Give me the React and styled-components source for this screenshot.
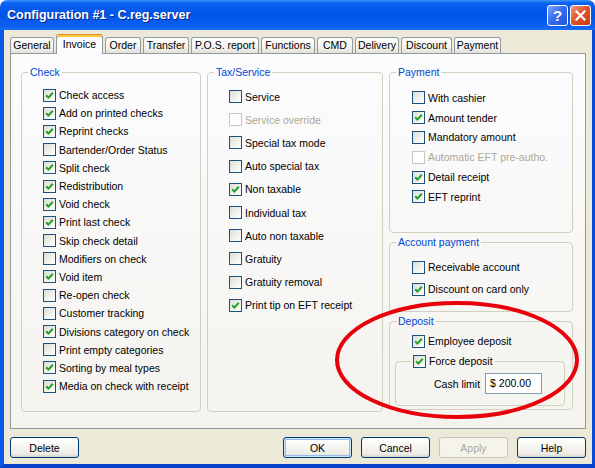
import styled, { createGlobalStyle } from "styled-components";

const GlobalStyle = createGlobalStyle`
  html, body {
    margin: 0;
    padding: 0;
    background: #ffffff;
  }
  body {
    font-family: "Liberation Sans", Arial, sans-serif;
    font-size: 10.5px;
  }
`;

const Window = styled.div`
  position: relative;
  width: 595px;
  height: 468px;
  display: flex;
  flex-direction: column;
  overflow: hidden;
`;

const TitleBar = styled.div`
  height: 30px;
  flex-shrink: 0;
  display: flex;
  align-items: center;
  padding: 0 4px 0 7px;
  border-radius: 7px 7px 0 0;
  background: linear-gradient(
    180deg,
    #3d95ff 0%,
    #0a62f0 10%,
    #0055e8 45%,
    #0a5ff0 85%,
    #1a6cf5 100%
  );
`;

const Title = styled.div`
  flex: 1;
  color: #ffffff;
  font-weight: 700;
  font-size: 12.5px;
  text-shadow: 1px 1px 0 #0a1e8c;
`;

const CaptionButton = styled.div`
  width: 21px;
  height: 21px;
  box-sizing: border-box;
  margin-left: 2px;
  border: 1px solid #ffffff;
  border-radius: 3px;
  display: flex;
  align-items: center;
  justify-content: center;
  color: #ffffff;
  font-weight: 700;
  font-size: 15px;
  background: ${({ $close }) =>
    $close
      ? "linear-gradient(135deg, #f0a080 0%, #e0552d 45%, #c8380f 100%)"
      : "linear-gradient(135deg, #80a8ff 0%, #3a6ef0 45%, #2254e0 100%)"};
`;

const Frame = styled.div`
  flex: 1;
  display: flex;
  flex-direction: column;
  background: #ece9d8;
  border-left: 4px solid #0a58e8;
  border-right: 3px solid #0a4ad8;
  border-bottom: 4px solid #0841c8;
  padding: 4px 6px 6px 6px;
`;

const TabRow = styled.div`
  height: 20px;
  display: flex;
  align-items: flex-end;
  gap: 2px;
`;

const Tab = styled.div`
  box-sizing: border-box;
  width: ${({ $w }) => $w}px;
  height: ${({ $active }) => ($active ? 20 : 16)}px;
  margin-bottom: ${({ $active }) => ($active ? 0 : 1)}px;
  padding-top: ${({ $active }) => ($active ? 2 : 0)}px;
  line-height: 15px;
  text-align: center;
  color: #000000;
  border: 1px solid #919b9c;
  border-bottom: none;
  border-radius: 3px 3px 0 0;
  position: relative;
  z-index: ${({ $active }) => ($active ? 1 : 0)};
  ${({ $active }) =>
    $active
      ? `
    border-top-color: #e68b2c;
    background: #fcfcfe;
    box-shadow: inset 0 2px 0 #ffc83c;
  `
      : `
    background: linear-gradient(180deg, #ffffff 0%, #f3f3ef 60%, #e2e1da 100%);
  `}
`;

const Panel = styled.div`
  box-sizing: border-box;
  height: 376px;
  margin-top: -1px;
  border: 1px solid #919b9c;
  background: linear-gradient(180deg, #fcfcfe 0%, #f4f3ee 100%);
  padding: 12px 12px 0 10px;
  display: grid;
  grid-template-columns: 180px 176px 184px;
  column-gap: 6px;
  align-items: start;
`;

const Column = styled.div`
  display: flex;
  flex-direction: column;
  gap: 3px;
`;

const Group = styled.fieldset`
  margin: 0;
  margin-top: ${({ $mt }) => $mt || 0}px;
  min-width: 0;
  box-sizing: border-box;
  height: ${({ $h }) => $h}px;
  border: 1px solid #d0d0bf;
  border-radius: 4px;
  padding: 0;
`;

const Legend = styled.legend`
  margin-left: ${({ $ml }) => $ml || 6}px;
  padding: 0 2px;
  line-height: ${({ $lh }) => $lh || 13}px;
  color: #0046d5;
`;

const Items = styled.div`
  padding: ${({ $pad }) => $pad};
`;

const Row = styled.div`
  display: flex;
  align-items: center;
  gap: 3px;
  height: ${({ $h }) => $h}px;
  padding-left: ${({ $indent }) => $indent || 0}px;
  color: ${({ $disabled }) => ($disabled ? "#aca899" : "#000000")};
  white-space: nowrap;
`;

const Box = styled.span`
  width: 13px;
  height: 13px;
  box-sizing: border-box;
  flex-shrink: 0;
  display: flex;
  align-items: center;
  justify-content: center;
  border: 1px solid ${({ $disabled }) => ($disabled ? "#cac8bb" : "#1c5180")};
  background: ${({ $disabled }) =>
    $disabled
      ? "#ffffff"
      : "linear-gradient(135deg, #dcdcd7 0%, #f0f0ea 50%, #ffffff 100%)"};
`;

const InnerRow = styled.div`
  display: flex;
  align-items: center;
  gap: 5px;
  color: #000000;
`;

const Input = styled.div`
  box-sizing: border-box;
  width: 57px;
  height: 21px;
  border: 1px solid #7f9db9;
  background: #ffffff;
  padding-left: 4px;
  line-height: 19px;
  color: #000000;
`;

const ButtonRow = styled.div`
  margin-top: 8px;
  display: flex;
  gap: 9px;
`;

const Spacer = styled.div`
  flex: 1;
`;

const Button = styled.div`
  box-sizing: border-box;
  width: 69px;
  height: 21px;
  border-radius: 3px;
  border: 1px solid ${({ $disabled }) => ($disabled ? "#c9c7ba" : "#003c74")};
  display: flex;
  align-items: center;
  justify-content: center;
  color: ${({ $disabled }) => ($disabled ? "#aca899" : "#000000")};
  background: ${({ $disabled }) =>
    $disabled
      ? "#f5f4ea"
      : "linear-gradient(180deg, #ffffff 0%, #f5f5f1 45%, #ecebe6 85%, #d6d0c5 100%)"};
  box-shadow: ${({ $default }) =>
    $default ? "inset 0 0 0 1px #cee7ff, inset 0 0 0 2px #98b8ea" : "none"};
`;

const Ring = styled.svg`
  position: absolute;
  left: 0;
  top: 0;
  pointer-events: none;
`;

function Check({ on, disabled }) {
  return (
    <Box $disabled={disabled}>
      {on && (
        <svg width="9" height="9" viewBox="0 0 9 9">
          <path
            d="M1.2 4.2 L3.4 6.6 L7.8 1.8"
            fill="none"
            stroke="#21a121"
            strokeWidth="2"
          />
        </svg>
      )}
    </Box>
  );
}

function Item({ label, on, disabled, h, indent }) {
  return (
    <Row $h={h} $disabled={disabled} $indent={indent}>
      <Check on={on} disabled={disabled} />
      <span>{label}</span>
    </Row>
  );
}

const tabs = [
  ["General", 44],
  ["Invoice", 47],
  ["Order", 36],
  ["Transfer", 46],
  ["P.O.S. report", 68],
  ["Functions", 54],
  ["CMD", 36],
  ["Delivery", 44],
  ["Discount", 51],
  ["Payment", 47],
];

const checkItems = [
  ["Check access", true],
  ["Add on printed checks", true],
  ["Reprint checks", true],
  ["Bartender/Order Status", false],
  ["Split check", true],
  ["Redistribution", true],
  ["Void check", true],
  ["Print last check", true],
  ["Skip check detail", false],
  ["Modifiers on check", false],
  ["Void  item", true],
  ["Re-open check", false],
  ["Customer tracking", false],
  ["Divisions category on check", true],
  ["Print empty categories", false],
  ["Sorting by meal types", true],
  ["Media on check with receipt", true],
];

const taxItems = [
  ["Service", false],
  ["Service override", false, true],
  ["Special tax mode", false],
  ["Auto special tax", false],
  ["Non taxable", true],
  ["Individual tax", false],
  ["Auto non taxable", false],
  ["Gratuity", false],
  ["Gratuity removal", false],
  ["Print tip on EFT receipt", true],
];

const paymentItems = [
  ["With cashier", false],
  ["Amount tender", true],
  ["Mandatory amount", false],
  ["Automatic EFT pre-autho.", false, true],
  ["Detail receipt", true],
  ["EFT reprint", true],
];

export default function App() {
  return (
    <Window>
      <GlobalStyle />
      <TitleBar>
        <Title>Configuration #1 - C.reg.server</Title>
        <CaptionButton>?</CaptionButton>
        <CaptionButton $close>
          <svg width="11" height="11" viewBox="0 0 11 11">
            <path
              d="M1.5 1.5 L9.5 9.5 M9.5 1.5 L1.5 9.5"
              stroke="#ffffff"
              strokeWidth="2.2"
              strokeLinecap="square"
            />
          </svg>
        </CaptionButton>
      </TitleBar>

      <Frame>
        <TabRow>
          {tabs.map(([name, w]) => (
            <Tab key={name} $w={w} $active={name === "Invoice"}>
              {name}
            </Tab>
          ))}
        </TabRow>

        <Panel>
          <Group $h={346}>
            <Legend>Check</Legend>
            <Items $pad="7px 4px 0 21px">
              {checkItems.map(([label, on]) => (
                <Item key={label} label={label} on={on} h={18.2} />
              ))}
            </Items>
          </Group>

          <Group $h={346}>
            <Legend>Tax/Service</Legend>
            <Items $pad="6px 4px 0 21px">
              {taxItems.map(([label, on, disabled]) => (
                <Item
                  key={label}
                  label={label}
                  on={on}
                  disabled={disabled}
                  h={23.2}
                />
              ))}
            </Items>
          </Group>

          <Column>
            <Group $h={167}>
              <Legend>Payment</Legend>
              <Items $pad="9px 4px 0 22px">
                {paymentItems.map(([label, on, disabled]) => (
                  <Item
                    key={label}
                    label={label}
                    on={on}
                    disabled={disabled}
                    h={19.8}
                  />
                ))}
              </Items>
            </Group>

            <Group $h={76}>
              <Legend>Account payment</Legend>
              <Items $pad="7px 4px 0 22px">
                <Item label="Receivable account" h={22} />
                <Item label="Discount on card only" on h={22} />
              </Items>
            </Group>

            <Group $h={95}>
              <Legend>Deposit</Legend>
              <Items $pad="3px 7px 0 5px">
                <Item label="Employee deposit" on h={20} indent={17} />
                <Group $h={52} $mt={3}>
                  <Legend $ml={15} $lh={15}>
                    <Row $h={15}>
                      <Check on />
                      <span>Force deposit</span>
                    </Row>
                  </Legend>
                  <Items $pad="4px 0 0 38px">
                    <InnerRow>
                      <span>Cash limit</span>
                      <Input>$ 200.00</Input>
                    </InnerRow>
                  </Items>
                </Group>
              </Items>
            </Group>
          </Column>
        </Panel>

        <ButtonRow>
          <Button>Delete</Button>
          <Spacer />
          <Button $default>OK</Button>
          <Button>Cancel</Button>
          <Button $disabled>Apply</Button>
          <Button>Help</Button>
        </ButtonRow>
      </Frame>

      <Ring width="595" height="468">
        <ellipse
          cx="457"
          cy="360"
          rx="120"
          ry="57"
          fill="none"
          stroke="#e8000b"
          strokeWidth="4"
        />
      </Ring>
    </Window>
  );
}
